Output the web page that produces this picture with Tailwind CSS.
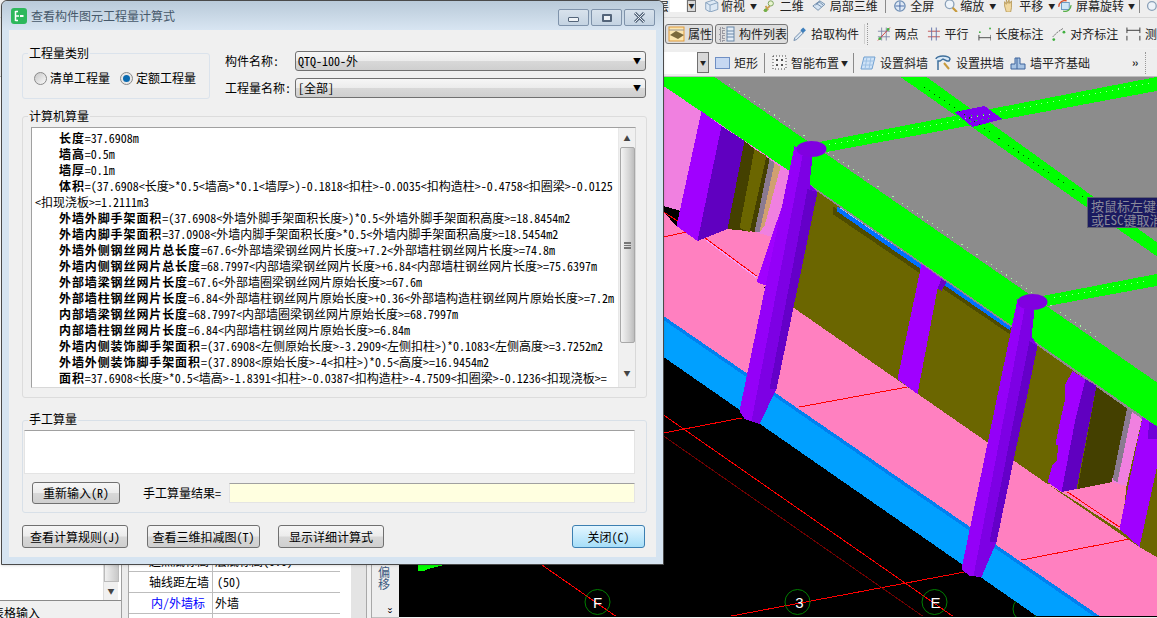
<!DOCTYPE html>
<html lang="zh-CN">
<head>
    <meta charset="UTF-8">
    <meta name="viewport" content="width=device-width, initial-scale=1.0">
    <title>查看构件图元工程量计算式</title>
    <script src="https://cdn.jsdelivr.net/npm/@tailwindcss/browser@4"></script>
</head>
<body class="bg-black">
<div class="relative w-[1157px] h-[618px] overflow-hidden flex flex-col bg-[#f0f0f0] text-[12px] leading-[16px] text-black font-['Noto_Sans_CJK_SC','Liberation_Sans',sans-serif] [font-feature-settings:'hwid']">

    <!-- toolbars -->
    <div class="h-[18px] flex items-center pl-[657px] pb-[5px] leading-[12px] bg-[#eeeeee] border-b border-[#d8d8d8] whitespace-nowrap text-[#222]">
        <span>层</span>
        <span class="ml-[1px] w-[18px] h-[12px] bg-white"></span>
        <span class="ml-[1px] w-[11px] h-[12px] border border-[#707070] bg-[#d8d8d8] flex items-center justify-center text-[6px]">▼</span>
        <svg class="ml-[8px]" width="18" height="12" viewBox="0 2 18 12"><path d="M2 4l9-3 5 3v8l-9 3-5-3z" fill="#dce8f4" stroke="#7d9ab8"/><path d="M2 4l5 3v8M7 7l9-3" fill="none" stroke="#7d9ab8"/></svg>
        <span class="ml-[1px]">俯视</span><span class="ml-[5px] text-[7px]">▼</span>
        <svg class="ml-[6px]" width="15" height="12" viewBox="0 2 15 12"><circle cx="9" cy="5" r="3" fill="#e8f4d0" stroke="#6f9a50"/><path d="M1 14l7-6M3 8l3 5" stroke="#c9a050" stroke-width="2"/><circle cx="3" cy="13" r="2" fill="#6fb04a"/></svg>
        <span class="ml-[4px]">二维</span>
        <svg class="ml-[8px]" width="16" height="12" viewBox="0 2 16 12"><path d="M1 8l8-6 6 4-8 7z" fill="#d6e4f2" stroke="#6a88a8"/><path d="M5 5l6 4M8 3l5 4M4 7l5-4" stroke="#6a88a8"/></svg>
        <span class="ml-[4px]">局部三维</span>
        <span class="ml-[7px] w-px h-[13px] bg-[#8a8a8a]"></span>
        <svg class="ml-[7px]" width="16" height="12" viewBox="0 2 16 12"><circle cx="8" cy="8" r="6" fill="#dfe9f5" stroke="#6f8fb5" stroke-width="1.5"/><path d="M8 3v10M3 8h10" stroke="#3c63a0"/></svg>
        <span class="ml-[4px]">全屏</span>
        <svg class="ml-[10px]" width="16" height="12" viewBox="0 2 16 12"><circle cx="6.500" cy="6" r="5" fill="#eef4fa" stroke="#8aa0b8" stroke-width="1.5"/><path d="M10 10l5 5" stroke="#c79a3c" stroke-width="2.500"/></svg>
        <span class="ml-[2px]">缩放</span><span class="ml-[5px] text-[7px]">▼</span>
        <svg class="ml-[6px]" width="15" height="12" viewBox="0 2 15 12"><path d="M3 8V3l2 3V1l2 4 1-4 1 4 2-3v8l-1 5H5z" fill="#f0d8a0" stroke="#b89a58"/></svg>
        <span class="ml-[4px]">平移</span><span class="ml-[5px] text-[7px]">▼</span>
        <svg class="ml-[3px]" width="16" height="12" viewBox="0 2 16 12"><rect x="4" y="4" width="9" height="8" fill="#cfe6f7" stroke="#5b8fbe"/><path d="M1 9a7 7 0 0 1 9-7" fill="none" stroke="#d8522e" stroke-width="1.500"/><path d="M15 7a7 7 0 0 1-9 7" fill="none" stroke="#58b04a" stroke-width="1.500"/></svg>
        <span class="ml-[4px]">屏幕旋转</span><span class="ml-[4px] text-[7px]">▼</span>
        <span class="ml-[4px] w-px h-[13px] bg-[#8a8a8a]"></span>
        <svg class="ml-[5px]" width="14" height="12" viewBox="0 0 14 12"><circle cx="8" cy="6" r="5" fill="#eef4fa" stroke="#8aa0b8" stroke-width="1.500"/></svg>
    </div>
    <div class="h-[30px] flex items-center pl-[665px] pt-[2px] bg-[#eeeeee] whitespace-nowrap text-[#222]">
        <span class="w-[48px] h-[20px] flex items-center pl-[2px] rounded-[3px] border border-[#777] bg-[#dedede]">
            <svg width="18" height="16" viewBox="0 0 18 16"><rect x="1" y="1" width="15" height="14" fill="#fbe6b0" stroke="#e09a3c"/><path d="M2 9l6-4 8 4-6 4z" fill="#7a6a3c"/><path d="M1 4h15" stroke="#999"/></svg>
            <span class="ml-[2px]">属性</span>
        </span>
        <span class="ml-[2px] w-[73px] h-[20px] flex items-center pl-[3px] rounded-[3px] border border-[#777] bg-[#dedede]">
            <svg width="16" height="16" viewBox="0 0 16 16"><path d="M1 2h4v3H1zM1 7h4v3H1zM1 12h4v3H1z" fill="none" stroke="#556" stroke-dasharray="1 1"/><rect x="8" y="1" width="7" height="14" fill="#e2ecf6" stroke="#6a88a8"/><path d="M8 5h7M8 8h7M8 11h7" stroke="#6a88a8"/></svg>
            <span class="ml-[4px]">构件列表</span>
        </span>
        <svg class="ml-[5px]" width="15" height="16" viewBox="0 0 15 16"><path d="M1 15l1-3 7-7 2 2-7 7z" fill="#dce8f4" stroke="#6a88a8"/><path d="M8 4l3-3 3 3-3 3z" fill="#3e7fbc"/></svg>
        <span class="ml-[4px]">拾取构件</span>
        <span class="ml-[5px] w-px h-[20px] bg-[#d0d0d0]"></span>
        <span class="ml-[2px] w-[2px] h-[22px] border-l border-dotted border-[#999]"></span>
        <svg class="ml-[8px]" width="15" height="16" viewBox="0 0 15 16"><path d="M1 5h13M1 11h13M5 1v14M10 1v14" stroke="#8088a8"/><path d="M1 15L14 1" stroke="#d04040"/><circle cx="3" cy="13" r="1.500" fill="#40b040"/><circle cx="12" cy="3" r="1.500" fill="#40b040"/></svg>
        <span class="ml-[4px]">两点</span>
        <svg class="ml-[8px]" width="15" height="16" viewBox="0 0 15 16"><path d="M1 5h13M1 11h13" stroke="#c05050"/><path d="M5 1v14M10 1v14" stroke="#6070a8"/></svg>
        <span class="ml-[4px]">平行</span>
        <svg class="ml-[9px]" width="15" height="16" viewBox="0 0 15 16"><path d="M1 12h13M1 9v6M14 9v6" stroke="#444"/><circle cx="2" cy="6" r="1" fill="#40b040"/><circle cx="13" cy="2" r="1" fill="#40b040"/></svg>
        <span class="ml-[4px]">长度标注</span>
        <svg class="ml-[8px]" width="16" height="16" viewBox="0 0 16 16"><path d="M2 11l5-5 6-4" fill="none" stroke="#555" stroke-dasharray="2 1"/><circle cx="3" cy="14" r="1.500" fill="#40b040"/><circle cx="14" cy="6" r="1.500" fill="#40b040"/></svg>
        <span class="ml-[4px]">对齐标注</span>
        <svg class="ml-[8px]" width="16" height="16" viewBox="0 0 16 16"><path d="M1 4h14M1 1v6M15 1v6M1 10v5M15 10v5" stroke="#333"/></svg>
        <span class="ml-[4px]">测</span>
    </div>
    <div class="h-[28px] mt-[1px] flex items-center pl-[664px] bg-[#eeeeee] border-b border-[#bdbdbd] whitespace-nowrap text-[#222]">
        <span class="w-[33px] h-[22px] bg-white"></span>
        <span class="w-[12px] h-[21px] border border-[#707070] bg-[#d8d8d8] flex items-center justify-center text-[6px]">▼</span>
        <svg class="ml-[6px]" width="15" height="12" viewBox="0 0 15 12"><rect x="0.500" y="0.500" width="14" height="11" fill="#c6d8f2" stroke="#6f8fc4"/></svg>
        <span class="ml-[4px]">矩形</span>
        <span class="ml-[6px] w-px h-[20px] bg-[#8a8a8a]"></span>
        <svg class="ml-[7px]" width="15" height="15" viewBox="0 0 15 15"><rect x="1" y="1" width="13" height="13" fill="#f4f4f4" stroke="#444" stroke-dasharray="1 2"/><path d="M4 4h2v2H4zM9 4h2v2H9zM4 9h2v2H4zM9 9h2v2H9z" fill="#555"/></svg>
        <span class="ml-[4px]">智能布置</span><span class="ml-[2px] text-[7px]">▼</span>
        <span class="ml-[5px] w-px h-[20px] bg-[#8a8a8a]"></span>
        <svg class="ml-[6px]" width="16" height="14" viewBox="0 0 16 14"><path d="M4 1h11l-3 12H1z" fill="#cfe3f7" stroke="#6f9fd0"/><path d="M3 5h11M2 9h11M7 1L5 13M11 1L9 13" stroke="#9cc0e4"/></svg>
        <span class="ml-[4px]">设置斜墙</span>
        <svg class="ml-[7px]" width="17" height="16" viewBox="0 0 17 16"><path d="M1 4a7 3 0 0 1 14 0l-1 2H12L8 4 5 6H3v9" fill="#d8e8f6" stroke="#40709c" stroke-width="1.500"/><path d="M9 8l5 6" stroke="#c79a3c" stroke-width="2"/></svg>
        <span class="ml-[4px]">设置拱墙</span>
        <svg class="ml-[6px]" width="16" height="15" viewBox="0 0 16 15"><path d="M1 14V9h4V3h5v6h5v5z" fill="#a8c4e4" stroke="#3f649c"/><path d="M7 3v11" stroke="#3f649c"/></svg>
        <span class="ml-[4px]">墙平齐基础</span>
        <span class="ml-[42px] text-[11px] font-bold leading-none tracking-[-1px]">››</span>
        <span class="ml-[8px] w-[2px] h-[22px] border-l border-dotted border-[#999]"></span>
    </div>

    <!-- main area -->
    <div class="flex-1 flex min-h-0">
        <div class="w-[122px] flex flex-col border-r border-[#a0a0a0]">
            <div class="flex-1 flex justify-end pr-[3px] bg-white border-b border-[#8a8a8a]">
                <div class="w-[15px] flex flex-col justify-end items-center bg-[#f0f0f0] border-l border-[#ddd]">
                    <div class="w-[15px] h-[18px] bg-[linear-gradient(90deg,#f0f0f0,#c8c8c8)] border border-[#bbb]"></div>
                    <div class="h-[18px] text-[7px] text-[#444] flex items-center">▼</div>
                </div>
            </div>
            <div class="h-[17px] -ml-[8px] pt-[4px] whitespace-nowrap">表格输入</div>
        </div>
        <div class="w-[7px] bg-[#ececec] border-r border-[#a8a8a8]"></div>
        <div class="w-[222px] flex flex-col justify-end bg-white">
            <div class="w-[211px] h-[21px] flex border-b border-[#bdbdbd]"><div class="w-[84px] border-r border-[#bdbdbd] text-right pr-[3px] pt-[2px]">起点底标高</div><div class="pl-[2px] pt-[2px]">层底标高(0.0)</div></div>
            <div class="w-[211px] h-[21px] flex border-b border-[#bdbdbd]"><div class="w-[84px] border-r border-[#bdbdbd] text-right pr-[3px] pt-[2px]">轴线距左墙</div><div class="pl-[4px] pt-[2px]">(50)</div></div>
            <div class="w-[211px] h-[21px] flex border-b border-[#bdbdbd]"><div class="w-[84px] border-r border-[#bdbdbd] text-right pr-[7px] pt-[2px] text-[#0000ff]">内/外墙标</div><div class="pl-[2px] pt-[2px]">外墙</div></div>
            <div class="h-[4px] flex"><div class="w-[84px] border-r border-[#bdbdbd]"></div></div>
        </div>
        <div class="w-[15px] bg-[#e4e4e4]"></div>
        <div class="w-[6px] bg-[#f0f0f0] border-x border-[#a8a8a8]"></div>
        <div class="w-[27px] flex flex-col items-center justify-end bg-[#eeeeee] border-b border-[#c0c0c0]">
            <div class="w-[14px] -ml-[1px] mb-[2px] text-[#3c5a80] leading-[12px] text-[12px]">偏<br>移</div>
            <div class="mt-[14px] mb-[2px] ml-[10px] text-[9px] font-bold rotate-90 leading-none">››</div>
        </div>

        <!-- 3D view -->
        <svg class="flex-1 bg-black" viewBox="400 78 757 540" width="757" height="540" shape-rendering="crispEdges">
            <g fill="none" stroke="#ff0000">
                <path d="M541 565L616 617"/>
                <path d="M664 416L953 617"/>
                <path d="M732 617L965 573"/>
                <path d="M664 434L742 419"/>
                <path d="M664 437L923 617" stroke="#700000"/>
            </g>
            <path d="M418 565h30l-20 5-3 2h-6z" fill="#00ff00"/>
            <g shape-rendering="auto">
                <g fill="none" stroke="#008000">
                    <circle cx="598" cy="603" r="12.500"/>
                    <circle cx="798" cy="603" r="12.500"/>
                    <circle cx="935" cy="603" r="12.500"/>
                    <circle cx="1026" cy="610" r="12.500"/>
                </g>
                <g fill="#ffffff" font-size="15" font-family="Liberation Sans" text-anchor="middle">
                    <text x="598" y="609">F</text>
                    <text x="800" y="609">3</text>
                    <text x="936" y="609">E</text>
                </g>
            </g>
            <!-- base band and floor -->
            <polygon points="664,317 1100,617 1037,617 664,358" fill="#00a0ff"/>
            <polygon points="664,317 1100,617 1094,617 664,321" fill="#0080f0"/>
            <polygon points="664,213 677,227 698,242 728,230 745,229 770,240 757,283 767,290 793,308 1157,558 1157,617 1100,617 664,317" fill="#ff80c0"/>
            <polygon points="696,240 728,228 780,226 780,295 757,285 700,250" fill="#ff80c0"/>
            <path d="M707 241L757 278" fill="none" stroke="#f0a0ff" stroke-width="2"/>
            <path d="M664 213L707 240L757 277" fill="none" stroke="#ff0000"/>
            <path d="M664 238L687 233" fill="none" stroke="#ff0000"/>
            <path d="M800 408L908 388M1022 561L1130 540M1068 493L1120 528" fill="none" stroke="#ff0000"/>
            <!-- walls -->
            <polygon points="810,187 1157,427 1157,558 1140,548 1048,485 793,308" fill="#6b6600"/>
            <polygon points="664,87 802,180 780,240 664,207" fill="#f080e0"/>
            <polygon points="745,142 755,150 770,160 757,233 728,230" fill="#444000"/>
            <polygon points="755,150 767,157 750,233 740,229" fill="#6b6600"/>
            <polygon points="770,160 775,164 760,233 755,233" fill="#8a7a90"/>
            <polygon points="775,164 781,168 765,227 760,233" fill="#d0a070"/>
            <polygon points="781,168 790,173 773,227 765,227" fill="#f080e0"/>
            <polygon points="833,207 1012,327 1010,335 833,215" fill="#4f4c00"/>
            <polygon points="837,207 1012,327 1010,331 837,212" fill="#0070ff"/>
            <polygon points="841,207 1012,325 1012,327 840,209" fill="#a8c4ff"/>
            <polygon points="1097,387 1133,408 1113,483 1078,490" fill="#444000"/>
            <polygon points="1133,408 1143,418 1127,487 1112,483" fill="#f080e0"/>
            <polygon points="1128,407 1133,410 1118,483 1113,481" fill="#8a7a90"/>
            <polygon points="1048,485 1078,490 1113,483 1127,487 1122,532 1068,497" fill="#ff80c0"/>
            <path d="M1068 493L1120 528" fill="none" stroke="#ff0000"/>
            <!-- slab and beams -->
            <polygon points="664,78 1157,78 1157,430 810,187 790,172 664,87" fill="#8c8c8c"/>
            <polygon points="901,78 927,78 1157,243 1157,257" fill="#00ff00"/>
            <polygon points="820,143 1157,78 1157,92 827,153" fill="#00ff00"/>
            <polygon points="1043,297 1157,275 1157,287 1048,307" fill="#00ff00"/>
            <polygon points="664,78 715,78 1157,383 1157,427 1032,340 1010,325 810,185 790,172 664,87" fill="#00ff00"/>
            <polygon points="955,113 985,107 1003,120 973,128" fill="#8000f0"/>
            <g fill="none" stroke-dasharray="1 5">
                <path d="M830 146L1150 84" stroke="#a0ffa0"/>
                <path d="M1055 299L1150 281" stroke="#a0ffa0"/>
                <path d="M925 88L1090 202" stroke="#005000"/>
                <path d="M730 85L1100 340" stroke="#a0ffa0"/>
                <path d="M960 118L990 115M965 123L995 119" stroke="#00ff00"/>
            </g>
            <!-- columns -->
            <polygon points="702,112 722,127 698,242 677,227" fill="#a000ff"/>
            <polygon points="722,127 745,142 728,230 698,242" fill="#6000c0"/>
            <polygon points="795,170 810,180 775,290 757,283" fill="#a000ff"/>
            <polygon points="922,265 947,283 942,292 938,290 918,395 898,380" fill="#a000ff"/>
            <polygon points="942,280 947,283 942,292 938,290" fill="#6a00c8"/>
            <polygon points="795,147 813,158 810,185 818,193 777,390 760,425 745,420 740,412" fill="#9400f8"/>
            <polygon points="804,152 813,158 810,185 818,193 777,390 760,425 752,422" fill="#7d00e4"/>
            <polygon points="808,190 818,193 777,390 770,390" fill="#6400c8"/>
            <ellipse cx="812" cy="150" rx="15" ry="8" fill="#8000e0" shape-rendering="auto"/>
            <polygon points="1018,300 1035,312 1032,337 1038,347 997,543 982,578 970,577 962,570" fill="#9400f8"/>
            <polygon points="1026,305 1035,312 1032,337 1038,347 997,543 982,578 974,577" fill="#7d00e4"/>
            <polygon points="1030,342 1038,347 997,543 990,543" fill="#6400c8"/>
            <ellipse cx="1033" cy="303" rx="15" ry="8" fill="#8000e0" shape-rendering="auto"/>
            <polygon points="1073,372 1097,387 1077,490 1062,493 1048,483 1053,466 1057,462 1059,447 1056,445 1060,425 1065,403 1066,385" fill="#a000ff"/>
            <polygon points="1086,380 1097,387 1077,490 1062,493 1076,420" fill="#6000c0"/>
            <polygon points="1143,418 1157,427 1157,470 1140,548 1120,530" fill="#a000ff"/>
            <polygon points="1150,423 1157,427 1157,440 1148,440" fill="#7000d8"/>
        </svg>
    </div>

    <!-- tooltip over the view -->
    <div class="absolute left-[1087px] top-[197px] w-[90px] h-[31px] px-[3px] pt-[1px] bg-[#1a1a60] border border-[#606070] text-[#8a8a9a] text-[13px] leading-[14px] whitespace-nowrap overflow-hidden">
        <div>按鼠标左键选</div>
        <div>或ESC键取消</div>
    </div>

    <!-- dialog window -->
    <div class="absolute left-[1px] top-0 w-[663px] h-[565px] flex flex-col rounded-t-[6px] border border-[#4a4a4a] bg-[#d6e4f1] shadow-sm">
        <div class="h-[29px] flex items-center pl-[9px] pr-[8px] rounded-t-[6px] bg-linear-to-b from-[#b9cad9] to-[#d8e5f2]">
            <svg width="16" height="16" viewBox="0 0 16 16"><rect width="16" height="16" rx="3" fill="#2eb85c"/><path d="M4.500 3v10M4.500 3.500h2.500M4.500 12.500h2.500M4.500 8h3.500" fill="none" stroke="#fff" stroke-width="1.500"/><rect x="9" y="7" width="3.500" height="2" fill="#fff"/></svg>
            <span class="ml-[4px] text-[#46586a]">查看构件图元工程量计算式</span>
            <div class="ml-auto flex gap-[2px] self-start mt-[8px]">
                <div class="w-[31px] h-[17px] flex items-center justify-center rounded-[2px] border border-[#7f93ab] bg-linear-to-b from-[#d8e2ec] to-[#c4d3e2]"><div class="w-[11px] h-[5px] mt-[3px] bg-[#eef2f6] border border-[#54657a] rounded-[1px]"></div></div>
                <div class="w-[31px] h-[17px] flex items-center justify-center rounded-[2px] border border-[#7f93ab] bg-linear-to-b from-[#d8e2ec] to-[#c4d3e2]"><div class="w-[10px] h-[8px] border-2 border-[#54657a] bg-[#eef2f6] rounded-[1px]"></div></div>
                <div class="w-[31px] h-[17px] flex items-center justify-center rounded-[2px] border border-[#7f93ab] bg-linear-to-b from-[#d8e2ec] to-[#c4d3e2]">
                    <svg width="13" height="11" viewBox="0 0 13 11"><path d="M2 1l9 9M11 1l-9 9" stroke="#54657a" stroke-width="3"/><path d="M2 1l9 9M11 1l-9 9" stroke="#e8eef4" stroke-width="1"/></svg>
                </div>
            </div>
        </div>
        <div class="w-[647px] h-[527px] ml-[7px] bg-[#f0f0f0] pl-[13px] pt-[23px] pr-[10px] flex flex-col">
            <div class="flex">
                <div class="relative w-[189px] h-[46px] rounded-[3px] border border-[#dbe3ec] flex items-center pl-[11px] pt-[4px]">
                    <span class="absolute left-[5px] -top-[9px] bg-[#f0f0f0] px-px">工程量类别</span>
                    <span class="w-[13px] h-[13px] rounded-full border border-[#8a8a8a] bg-linear-to-br from-[#c8c8c8] to-[#fafafa]"></span>
                    <span class="ml-[3px]">清单工程量</span>
                    <span class="ml-[10px] w-[13px] h-[13px] rounded-full border border-[#8a8a8a] bg-[#e8e8e8] flex items-center justify-center"><span class="w-[7px] h-[7px] rounded-full bg-[#0a6ab0]"></span></span>
                    <span class="ml-[3px]">定额工程量</span>
                </div>
                <div class="ml-[15px] flex-1 flex flex-col -mt-[2px] gap-[7px]">
                    <div class="flex items-center">
                        <span class="w-[70px]">构件名称:</span>
                        <div class="w-[351px] h-[20px] flex items-center justify-between pl-[2px] pr-[4px] rounded-[3px] border border-[#707070] bg-[linear-gradient(#f6f6f6_0%,#ececec_48%,#d8d8d8_52%,#cfcfcf_100%)]"><span>QTQ-100-外</span><span class="text-[8px] leading-none">▼</span></div>
                    </div>
                    <div class="flex items-center">
                        <span class="w-[70px]">工程量名称:</span>
                        <div class="w-[351px] h-[20px] flex items-center justify-between pl-[2px] pr-[4px] rounded-[3px] border border-[#707070] bg-[linear-gradient(#f6f6f6_0%,#ececec_48%,#d8d8d8_52%,#cfcfcf_100%)]"><span>[全部]</span><span class="text-[8px] leading-none">▼</span></div>
                    </div>
                </div>
            </div>

            <div class="relative mt-[17px] w-[625px] h-[282px] rounded-[3px] border border-[#dcdcdc] pl-[8px] pt-[10px]">
                <span class="absolute left-[5px] -top-[9px] bg-[#f0f0f0] px-px">计算机算量</span>
                <div class="w-[605px] h-[261px] flex border border-[#a0a0a0] border-b-[#d8d8d8] border-r-[#d8d8d8] bg-white">
                    <div class="flex-1 overflow-hidden pl-[3px] pt-[2px] whitespace-nowrap [&_b]:tracking-[0.9px]">
                        <div class="pl-[24px]"><b>长度</b>=37.6908m</div>
                        <div class="pl-[24px]"><b>墙高</b>=0.5m</div>
                        <div class="pl-[24px]"><b>墙厚</b>=0.1m</div>
                        <div class="pl-[24px]"><b>体积</b>=(37.6908&lt;长度&gt;*0.5&lt;墙高&gt;*0.1&lt;墙厚&gt;)-0.1818&lt;扣柱&gt;-0.0035&lt;扣构造柱&gt;-0.4758&lt;扣圈梁&gt;-0.0125</div>
                        <div>&lt;扣现浇板&gt;=1.2111m3</div>
                        <div class="pl-[24px]"><b>外墙外脚手架面积</b>=(37.6908&lt;外墙外脚手架面积长度&gt;)*0.5&lt;外墙外脚手架面积高度&gt;=18.8454m2</div>
                        <div class="pl-[24px]"><b>外墙内脚手架面积</b>=37.0908&lt;外墙内脚手架面积长度&gt;*0.5&lt;外墙内脚手架面积高度&gt;=18.5454m2</div>
                        <div class="pl-[24px]"><b>外墙外侧钢丝网片总长度</b>=67.6&lt;外部墙梁钢丝网片长度&gt;+7.2&lt;外部墙柱钢丝网片长度&gt;=74.8m</div>
                        <div class="pl-[24px]"><b>外墙内侧钢丝网片总长度</b>=68.7997&lt;内部墙梁钢丝网片长度&gt;+6.84&lt;内部墙柱钢丝网片长度&gt;=75.6397m</div>
                        <div class="pl-[24px]"><b>外部墙梁钢丝网片长度</b>=67.6&lt;外部墙圈梁钢丝网片原始长度&gt;=67.6m</div>
                        <div class="pl-[24px]"><b>外部墙柱钢丝网片长度</b>=6.84&lt;外部墙柱钢丝网片原始长度&gt;+0.36&lt;外部墙构造柱钢丝网片原始长度&gt;=7.2m</div>
                        <div class="pl-[24px]"><b>内部墙梁钢丝网片长度</b>=68.7997&lt;内部墙圈梁钢丝网片原始长度&gt;=68.7997m</div>
                        <div class="pl-[24px]"><b>内部墙柱钢丝网片长度</b>=6.84&lt;内部墙柱钢丝网片原始长度&gt;=6.84m</div>
                        <div class="pl-[24px]"><b>外墙内侧装饰脚手架面积</b>=(37.6908&lt;左侧原始长度&gt;-3.2909&lt;左侧扣柱&gt;)*0.1083&lt;左侧高度&gt;=3.7252m2</div>
                        <div class="pl-[24px]"><b>外墙外侧装饰脚手架面积</b>=(37.8908&lt;原始长度&gt;-4&lt;扣柱&gt;)*0.5&lt;高度&gt;=16.9454m2</div>
                        <div class="pl-[24px]"><b>面积</b>=37.6908&lt;长度&gt;*0.5&lt;墙高&gt;-1.8391&lt;扣柱&gt;-0.0387&lt;扣构造柱&gt;-4.7509&lt;扣圈梁&gt;-0.1236&lt;扣现浇板&gt;=</div>
                    </div>
                    <div class="w-[17px] flex flex-col items-center bg-[#f0f0f0] border-l border-[#e8e8e8]">
                        <div class="h-[19px] text-[7px] text-[#444] flex items-center">▲</div>
                        <div class="w-[15px] h-[196px] flex items-center justify-center rounded-[2px] border border-[#a8a8a8] bg-[linear-gradient(90deg,#f4f4f4,#d6d6d6_60%,#bdbdbd)]">
                            <div class="w-[7px] h-[7px] border-y border-[#777] bg-[linear-gradient(#777_1px,transparent_1px)] bg-[length:100%_2px]"></div>
                        </div>
                        <div class="flex-1 flex items-end pb-[6px] text-[7px] text-[#444]">▼</div>
                    </div>
                </div>
            </div>

            <div class="relative mt-[22px] w-[625px] h-[93px] rounded-[3px] border border-[#d8e0e8] pl-[1px] pt-[9px]">
                <span class="absolute left-[5px] -top-[10px] bg-[#f0f0f0] px-px">手工算量</span>
                <div class="w-[611px] h-[44px] bg-white border border-[#e4e4e4] border-t-[#a0a0a0]"></div>
                <div class="flex items-center mt-[8px] pl-[8px]">
                    <button class="w-[88px] h-[22px] rounded-[3px] border border-[#707070] bg-[linear-gradient(#f6f6f6_0%,#ececec_48%,#d8d8d8_52%,#cfcfcf_100%)]">重新输入(R)</button>
                    <span class="ml-[23px] w-[86px]">手工算量结果=</span>
                    <div class="w-[406px] h-[20px] bg-[#ffffe0] border border-[#e4e4e4] border-t-[#a0a0a0]"></div>
                </div>
            </div>

            <div class="flex mt-[12px]">
                <button class="w-[106px] h-[23px] rounded-[3px] border border-[#707070] bg-[linear-gradient(#f6f6f6_0%,#ececec_48%,#d8d8d8_52%,#cfcfcf_100%)]">查看计算规则(J)</button>
                <button class="ml-[19px] w-[113px] h-[23px] rounded-[3px] border border-[#707070] bg-[linear-gradient(#f6f6f6_0%,#ececec_48%,#d8d8d8_52%,#cfcfcf_100%)]">查看三维扣减图(T)</button>
                <button class="ml-[18px] w-[106px] h-[23px] rounded-[3px] border border-[#707070] bg-[linear-gradient(#f6f6f6_0%,#ececec_48%,#d8d8d8_52%,#cfcfcf_100%)]">显示详细计算式</button>
                <button class="ml-[188px] w-[73px] h-[23px] rounded-[3px] border border-[#3c7fb1] bg-linear-to-b from-[#e4f6ff] to-[#a6def8]">关闭(C)</button>
            </div>
        </div>
    </div>
</div>
</body>
</html>
